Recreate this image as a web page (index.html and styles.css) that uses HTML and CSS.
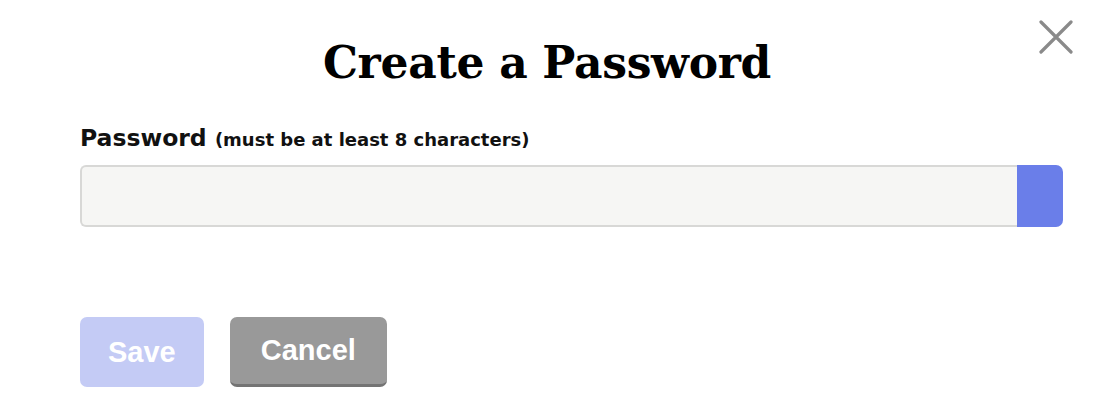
FILE: index.html
```html
<!DOCTYPE html>
<html lang="en">
<head>
    <meta charset="UTF-8">
    <meta name="viewport" content="width=device-width, initial-scale=1.0">
    <title>Create a Password</title>
    <link rel="stylesheet" href="styles.css">
</head>
<body>
    <div class="modal">
        <button class="close-btn" aria-label="Close">
            <svg width="34" height="34" viewBox="0 0 34 34">
                <path d="M2 2 L32 32 M32 2 L2 32" stroke="#8a8a8a" stroke-width="3.2" stroke-linecap="round" fill="none"/>
            </svg>
        </button>
        <h1 class="title">Create a Password</h1>
        <div class="form">
            <label class="field-label" for="password">Password <span class="hint">(must be at least 8 characters)</span></label>
            <div class="input-row">
                <input id="password" type="password" class="text-input">
                <div class="input-addon"></div>
            </div>
            <div class="actions">
                <button class="btn btn-save" disabled>Save</button>
                <button class="btn btn-cancel">Cancel</button>
            </div>
        </div>
    </div>
</body>
</html>
```

FILE: styles.css
```css
body, html {
    margin: 0;
    background-color: #ffffff;
    font-family: "Liberation Sans", Arial, sans-serif;
}

.modal {
    position: relative;
    width: 1094px;
    height: 419px;
    box-sizing: border-box;
    padding-top: 35px;
}

.close-btn {
    position: absolute;
    top: 20px;
    right: 21px;
    padding: 0;
    border: none;
    background: none;
    cursor: pointer;
}

.close-btn svg {
    display: block;
}

.title {
    margin: 0;
    text-align: center;
    font-family: "DejaVu Serif", "Liberation Serif", serif;
    font-weight: 700;
    font-size: 44px;
    line-height: 56px;
    letter-spacing: -0.3px;
    color: #000;
}

.form {
    padding: 0 31px 0 80px;
    margin-top: 32px;
}

.field-label {
    display: block;
    font-family: "DejaVu Sans", sans-serif;
    font-weight: 700;
    font-size: 23.5px;
    line-height: 30px;
    color: #111;
}

.hint {
    font-size: 18px;
}

.input-row {
    display: flex;
    margin-top: 10px;
    height: 62px;
}

.text-input {
    flex: 1;
    margin: 0;
    box-sizing: border-box;
    height: 100%;
    background-color: #f6f6f4;
    border: 2px solid #d8d8d6;
    border-right: none;
    border-radius: 6px 0 0 6px;
    outline: none;
}

.input-addon {
    width: 46px;
    background-color: #6a7ee9;
    border-radius: 0 7px 7px 0;
}

.actions {
    display: flex;
    gap: 26px;
    margin-top: 90px;
}

.btn {
    height: 70px;
    padding: 0 31px;
    border: none;
    border-radius: 7px;
    color: #fff;
    font-family: "Liberation Sans", Arial, sans-serif;
    font-weight: 700;
    font-size: 29px;
}

.btn-save {
    padding: 0 28px;
    background-color: #c4cbf5;
}

.btn-cancel {
    background-color: #999999;
    border-bottom: 3px solid #747474;
}
```
